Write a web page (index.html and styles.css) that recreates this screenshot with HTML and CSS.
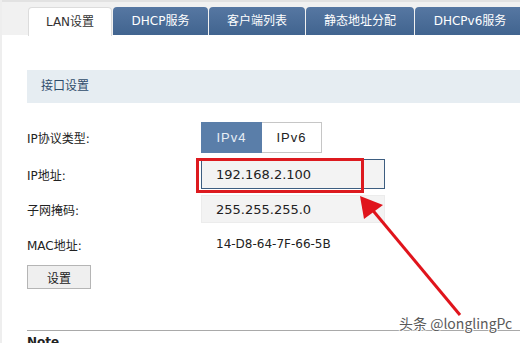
FILE: index.html
```html
<!DOCTYPE html>
<html>
<head>
<meta charset="utf-8">
<link rel="stylesheet" href="styles.css">
</head>
<body>
<div class="page">
  <div class="tabbar">
    <div class="tab active" style="width:84px">LAN设置</div>
    <div class="tab" style="width:95px">DHCP服务</div>
    <div class="tab" style="width:96px">客户端列表</div>
    <div class="tab" style="width:108px">静态地址分配</div>
    <div class="tab" style="width:110px">DHCPv6服务</div>
  </div>

  <div class="content">
    <div class="section_head">接口设置</div>

    <div class="row row_proto">
      <div class="label">IP协议类型:</div>
      <div class="seg">
        <span class="seg_btn on">IPv4</span>
        <span class="seg_btn">IPv6</span>
      </div>
    </div>
    <div class="row row_ip">
      <div class="label">IP地址:</div>
      <div class="field focus">192.168.2.100</div>
    </div>
    <div class="row row_mask">
      <div class="label">子网掩码:</div>
      <div class="field">255.255.255.0</div>
    </div>
    <div class="row row_mac">
      <div class="label">MAC地址:</div>
      <div class="value">14-D8-64-7F-66-5B</div>
    </div>
    <button class="set_btn">设置</button>

    <div class="rule"></div>
    <div class="note">Note</div>
  </div>

  <!-- annotation overlay -->
  <div class="mark_box"></div>
  <svg class="arrow" width="520" height="343" viewBox="0 0 520 343">
    <line x1="460" y1="315" x2="370" y2="207" stroke="#e0141c" stroke-width="3"/>
    <polygon points="360,196 364,219 383,205" fill="#e0141c"/>
  </svg>
  <div class="watermark">头条 @longlingPc</div>
</div>
</body>
</html>
```

FILE: styles.css
```css
body{
  margin: 0;
  background: #fff;
  font-family: "DejaVu Sans", "Noto Sans CJK SC", sans-serif;
  font-size: 12px;
  color: #222;
}

.page{
  width: 520px;
  height: 343px;
  overflow: hidden;
  position: relative;
  border-left: 2px solid #eeeeee;
  box-sizing: border-box;
}

.tabbar{
  height: 35px;
  background: #f1f1f1;
  border-top: 2px solid #e2e2e2;
  box-sizing: border-box;
  display: flex;
  align-items: flex-end;
  padding-left: 26px;
  gap: 1px;
}

.tab{
  flex: none;
  height: 28px;
  line-height: 28px;
  text-align: center;
  color: #fff;
  background: linear-gradient(#5677a2, #41648f);
  border-radius: 4px 4px 0 0;
  font-size: 12px;
}

.tab.active{
  background: #fff;
  color: #333;
  border: 1px solid #dcdcdc;
  border-bottom: none;
  height: 29px;
  box-sizing: border-box;
  margin-bottom: -1px;
}

.content{
  padding-left: 25px;
}

.section_head{
  margin-top: 35px;
  height: 33px;
  line-height: 33px;
  background: #e6edf2;
  padding-left: 14px;
  color: #2f4c6b;
  font-size: 12px;
}

.row{
  display: flex;
  align-items: center;
}

.label{
  width: 174px;
  flex: none;
}

.row_proto{
  margin-top: 19px;
  height: 31px;
}

.seg{
  display: flex;
  height: 31px;
  border: 1px solid #c6c6c6;
  box-sizing: border-box;
}

.seg_btn{
  width: 59px;
  line-height: 29px;
  text-align: center;
  font-family: "Liberation Sans", sans-serif;
  font-size: 13px;
  letter-spacing: 1px;
}

.seg_btn.on{
  background: #5a7ea9;
  color: #e8eef6;
  width: 61px;
  margin: -1px 0 -1px -1px;
  line-height: 31px;
}

.row_ip{
  margin-top: 6px;
  height: 30px;
}

.row_mask{
  margin-top: 6px;
  height: 28px;
}

.field{
  width: 184px;
  height: 100%;
  box-sizing: border-box;
  background: #f3f3f3;
  border: 1px solid #ececec;
  padding-left: 14px;
  display: flex;
  align-items: center;
  font-size: 13px;
  color: #222;
}

.field.focus{
  border-color: #3d5d80;
}

.row_mac{
  margin-top: 9px;
  height: 24px;
}

.value{
  padding-left: 15px;
  font-size: 12px;
}

.set_btn{
  display: block;
  margin-top: 9px;
  width: 64px;
  height: 24px;
  background: #efefef;
  border: 1px solid #b5b5b5;
  font-family: "Noto Sans CJK SC", sans-serif;
  font-size: 12px;
  color: #222;
  padding: 0;
}

.rule{
  margin-top: 41px;
  height: 1px;
  background: #a9a9a9;
}

.note{
  margin-top: 4px;
  font-weight: bold;
}

.mark_box{
  position: absolute;
  left: 194px;
  top: 158px;
  width: 162px;
  height: 29px;
  border: 3px solid #dd1a1f;
}

.arrow{
  position: absolute;
  left: -2px;
  top: 0;
}

.watermark{
  position: absolute;
  left: 397px;
  top: 313px;
  font-family: "Noto Sans CJK SC", sans-serif;
  font-size: 14px;
  color: #5a5a5a;
  text-shadow: 1px 0 #fff, -1px 0 #fff, 0 1px #fff, 0 -1px #fff;
}
```
